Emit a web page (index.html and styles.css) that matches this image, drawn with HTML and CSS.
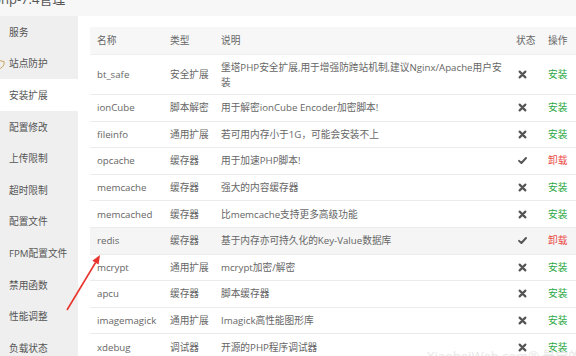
FILE: index.html
```html
<!DOCTYPE html>
<html lang="zh-CN">
<head>
<meta charset="utf-8">
<title>php-7.4管理</title>
<link rel="stylesheet" href="styles.css">
</head>
<body>
<div class="page">
  <div class="titlebar"><span class="title">php-7.4管理</span></div>
  <div class="layout">
    <nav class="side">
      <div class="item">服务</div>
      <div class="item">
        <svg class="shield" viewBox="0 0 10 10" width="10" height="10"><path d="M5 9.2 C2.2 7.6 1 5.8 1 3.6 L1 1.8 L5 0.8 L9 1.8 L9 3.6 C9 5.8 7.8 7.6 5 9.2 Z" fill="none" stroke="#c9a258" stroke-width="1.1"/></svg>
        站点防护
      </div>
      <div class="item active">安装扩展</div>
      <div class="item">配置修改</div>
      <div class="item">上传限制</div>
      <div class="item">超时限制</div>
      <div class="item">配置文件</div>
      <div class="item">FPM配置文件</div>
      <div class="item">禁用函数</div>
      <div class="item">性能调整</div>
      <div class="item">负载状态</div>
    </nav>
    <main class="main">
      <div class="table">
        <div class="row head">
          <div class="cell name">名称</div>
          <div class="cell">类型</div>
          <div class="cell">说明</div>
          <div class="cell">状态</div>
          <div class="cell">操作</div>
        </div>
        <div class="row">
          <div class="cell name">bt_safe</div>
          <div class="cell">安全扩展</div>
          <div class="cell desc">堡塔PHP安全扩展,用于增强防跨站机制,建议Nginx/Apache用户安装</div>
          <div class="cell"><svg class="ico" viewBox="0 0 10 10"><path d="M1.8 1.8 L8.2 8.2 M8.2 1.8 L1.8 8.2" stroke="#555" stroke-width="2.4" stroke-linecap="round"/></svg></div>
          <div class="cell op install">安装</div>
        </div>
        <div class="row">
          <div class="cell name">ionCube</div>
          <div class="cell">脚本解密</div>
          <div class="cell desc">用于解密ionCube Encoder加密脚本!</div>
          <div class="cell"><svg class="ico" viewBox="0 0 10 10"><path d="M1.8 1.8 L8.2 8.2 M8.2 1.8 L1.8 8.2" stroke="#555" stroke-width="2.4" stroke-linecap="round"/></svg></div>
          <div class="cell op install">安装</div>
        </div>
        <div class="row">
          <div class="cell name">fileinfo</div>
          <div class="cell">通用扩展</div>
          <div class="cell desc">若可用内存小于1G，可能会安装不上</div>
          <div class="cell"><svg class="ico" viewBox="0 0 10 10"><path d="M1.8 1.8 L8.2 8.2 M8.2 1.8 L1.8 8.2" stroke="#555" stroke-width="2.4" stroke-linecap="round"/></svg></div>
          <div class="cell op install">安装</div>
        </div>
        <div class="row">
          <div class="cell name">opcache</div>
          <div class="cell">缓存器</div>
          <div class="cell desc">用于加速PHP脚本!</div>
          <div class="cell"><svg class="ico" viewBox="0 0 10 10"><path d="M1.2 5.4 L3.8 7.8 L8.9 2.2" fill="none" stroke="#555" stroke-width="2.2" stroke-linecap="round" stroke-linejoin="round"/></svg></div>
          <div class="cell op remove">卸载</div>
        </div>
        <div class="row">
          <div class="cell name">memcache</div>
          <div class="cell">缓存器</div>
          <div class="cell desc">强大的内容缓存器</div>
          <div class="cell"><svg class="ico" viewBox="0 0 10 10"><path d="M1.8 1.8 L8.2 8.2 M8.2 1.8 L1.8 8.2" stroke="#555" stroke-width="2.4" stroke-linecap="round"/></svg></div>
          <div class="cell op install">安装</div>
        </div>
        <div class="row">
          <div class="cell name">memcached</div>
          <div class="cell">缓存器</div>
          <div class="cell desc">比memcache支持更多高级功能</div>
          <div class="cell"><svg class="ico" viewBox="0 0 10 10"><path d="M1.8 1.8 L8.2 8.2 M8.2 1.8 L1.8 8.2" stroke="#555" stroke-width="2.4" stroke-linecap="round"/></svg></div>
          <div class="cell op install">安装</div>
        </div>
        <div class="row hover">
          <div class="cell name">redis</div>
          <div class="cell">缓存器</div>
          <div class="cell desc">基于内存亦可持久化的Key-Value数据库</div>
          <div class="cell"><svg class="ico" viewBox="0 0 10 10"><path d="M1.2 5.4 L3.8 7.8 L8.9 2.2" fill="none" stroke="#555" stroke-width="2.2" stroke-linecap="round" stroke-linejoin="round"/></svg></div>
          <div class="cell op remove">卸载</div>
        </div>
        <div class="row">
          <div class="cell name">mcrypt</div>
          <div class="cell">通用扩展</div>
          <div class="cell desc">mcrypt加密/解密</div>
          <div class="cell"><svg class="ico" viewBox="0 0 10 10"><path d="M1.8 1.8 L8.2 8.2 M8.2 1.8 L1.8 8.2" stroke="#555" stroke-width="2.4" stroke-linecap="round"/></svg></div>
          <div class="cell op install">安装</div>
        </div>
        <div class="row">
          <div class="cell name">apcu</div>
          <div class="cell">缓存器</div>
          <div class="cell desc">脚本缓存器</div>
          <div class="cell"><svg class="ico" viewBox="0 0 10 10"><path d="M1.8 1.8 L8.2 8.2 M8.2 1.8 L1.8 8.2" stroke="#555" stroke-width="2.4" stroke-linecap="round"/></svg></div>
          <div class="cell op install">安装</div>
        </div>
        <div class="row">
          <div class="cell name">imagemagick</div>
          <div class="cell">通用扩展</div>
          <div class="cell desc">Imagick高性能图形库</div>
          <div class="cell"><svg class="ico" viewBox="0 0 10 10"><path d="M1.8 1.8 L8.2 8.2 M8.2 1.8 L1.8 8.2" stroke="#555" stroke-width="2.4" stroke-linecap="round"/></svg></div>
          <div class="cell op install">安装</div>
        </div>
        <div class="row">
          <div class="cell name">xdebug</div>
          <div class="cell">调试器</div>
          <div class="cell desc">开源的PHP程序调试器</div>
          <div class="cell"><svg class="ico" viewBox="0 0 10 10"><path d="M1.8 1.8 L8.2 8.2 M8.2 1.8 L1.8 8.2" stroke="#555" stroke-width="2.4" stroke-linecap="round"/></svg></div>
          <div class="cell op install">安装</div>
        </div>
      </div>
    </main>
  </div>
  <svg class="arrow" viewBox="0 0 576 356" width="576" height="356">
    <line x1="67" y1="310" x2="95.6" y2="262.5" stroke="#e8342c" stroke-width="1.6"/>
    <polygon points="100,255 98.6,264.6 92.3,260.8" fill="#e8342c"/>
  </svg>
  <div class="watermark">XiaoheiWeb.com® 最宝的站长</div>
</div>
</body>
</html>
```
FILE: styles.css
```css
* { box-sizing: border-box; }
html, body { margin: 0; padding: 0; }
body {
  width: 576px;
  height: 356px;
  overflow: hidden;
  background: #fff;
  font-family: "Open Sans", "Noto Sans CJK SC", sans-serif;
  font-size: 9.7px;
  color: #666;
}
.page {
  position: relative;
  width: 576px;
  height: 356px;
  overflow: hidden;
}
.titlebar {
  height: 16px;
  background: #f7f7f7;
  overflow: hidden;
}
.title {
  display: block;
  margin: -9px 0 0 -7px;
  font-size: 13px;
  line-height: 16px;
  color: #555;
  white-space: nowrap;
}
.layout {
  display: flex;
  height: 340px;
}
.side {
  width: 78px;
  flex: none;
  background: #efefef;
  display: flex;
  flex-direction: column;
}
.item {
  position: relative;
  height: 31.6px;
  flex: none;
  display: flex;
  align-items: center;
  padding-left: 9px;
  font-size: 9.7px;
  color: #555;
  white-space: nowrap;
}
.item.active { background: #fff; }
.shield {
  position: absolute;
  left: -4px;
  top: 12px;
  width: 9px;
  height: 9px;
}
.main {
  flex: 1;
  background: #fff;
  padding: 11px 0 0 12px;
  overflow: hidden;
}
.table {
  width: 520px;
}
.row {
  display: grid;
  grid-template-columns: 80px 51px 295px 32px 62px;
  align-items: center;
  min-height: 26.6px;
  border-bottom: 1px solid #ececec;
  background: #fff;
}
.row.head {
  min-height: 28px;
  background: #f7f7f7;
  border-bottom: 1px solid #efefef;
}
.row.hover { background: #f5f5f5; }
.cell {
  padding: 4.5px 0;
  line-height: 15px;
  white-space: nowrap;
}
.cell.name { padding-left: 7px; color: #666; }
.cell.desc {
  white-space: normal;
  padding-right: 8px;
}
.ico {
  display: block;
  width: 9px;
  height: 9px;
  margin-left: 2px;
}
.op.install { color: #2aa845; }
.op.remove { color: #ec4a45; }
.arrow {
  position: absolute;
  left: 0;
  top: 0;
  pointer-events: none;
}
.watermark {
  position: absolute;
  left: 427px;
  bottom: -9px;
  font-size: 13px;
  color: #e6e6e6;
  white-space: nowrap;
}
```
